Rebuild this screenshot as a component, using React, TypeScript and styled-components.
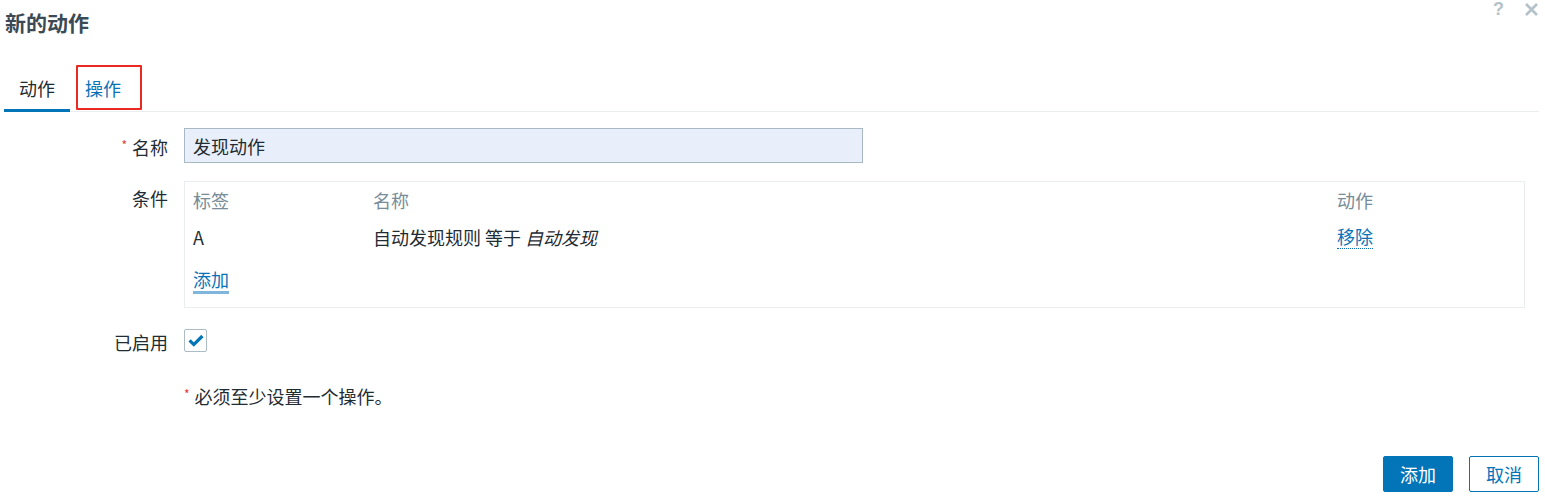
import styled, { createGlobalStyle } from 'styled-components';

const GlobalStyle = createGlobalStyle`
  body {
    margin: 0;
    background: #ffffff;
    font-family: "Noto Sans CJK SC", "Noto Sans", sans-serif;
    font-size: 18px;
    color: #1f2c33;
  }
`;

const Page = styled.div`
  width: 1545px;
  height: 501px;
  box-sizing: border-box;
  padding: 0 6px 0 4px;
  display: flex;
  flex-direction: column;
`;

const Header = styled.div`
  display: flex;
  justify-content: space-between;
  align-items: flex-start;
  height: 44px;
`;

const Title = styled.h2`
  margin: 0;
  padding-left: 1px;
  font-size: 21px;
  line-height: 44px;
  font-weight: 700;
  color: #3b4a54;
`;

const HeaderControls = styled.div`
  display: flex;
  align-items: center;
  gap: 20px;
  padding-top: 1px;
  color: #b4c1c9;
`;

const HelpMark = styled.span`
  font-family: "Liberation Sans", sans-serif;
  font-size: 18px;
  font-weight: 700;
  line-height: 17px;
`;

const TabList = styled.div`
  display: flex;
  margin-top: 20px;
  border-bottom: 1px solid #ebeef0;
`;

const Tab = styled.div<{ $active?: boolean }>`
  position: relative;
  padding: 12px 15px 9px 15px;
  line-height: 24px;
  color: ${p => (p.$active ? '#1f2c33' : '#0a72b6')};
  border-bottom: 3px solid ${p => (p.$active ? '#0275b8' : 'transparent')};
  margin-bottom: -1px;
`;

// red annotation box drawn over the second tab
const Marker = styled.span`
  position: absolute;
  left: 6px;
  right: -6px;
  top: 1px;
  bottom: -1px;
  border: 2px solid #ea2a22;
  border-radius: 1px;
`;

const Form = styled.div`
  display: grid;
  grid-template-columns: 164px 1fr;
  column-gap: 16px;
  padding-top: 16px;
  padding-right: 14px;
`;

const Label = styled.div<{ $mt?: number }>`
  text-align: right;
  line-height: 24px;
  padding-top: 5px;
  margin-top: ${p => p.$mt ?? 0}px;
  color: #1f2c33;
`;

const Field = styled.div<{ $mt?: number }>`
  margin-top: ${p => p.$mt ?? 0}px;
  display: flex;
  align-items: flex-start;
`;

const Star = styled.span`
  color: #e33734;
  font-size: 12px;
  vertical-align: 5px;
  margin-right: 5px;
`;

const TextInput = styled.input`
  width: 679px;
  height: 35px;
  box-sizing: border-box;
  border: 1px solid #a9b9c4;
  background: #e8effa;
  padding: 0 8px;
  font-family: inherit;
  font-size: 18px;
  color: #1f2c33;
  outline: none;
`;

const CondBox = styled.div`
  flex: 1;
  border: 1px solid #ebeef0;
  padding: 6px 9px 13px 8px;
`;

const CondRow = styled.div<{ $head?: boolean; $mt?: number }>`
  display: grid;
  grid-template-columns: 180px 1fr 178px;
  line-height: 24px;
  margin-top: ${p => p.$mt ?? 0}px;
  color: ${p => (p.$head ? '#768d99' : '#1f2c33')};
`;

const Italic = styled.em`
  font-style: italic;
`;

const DottedLink = styled.span`
  justify-self: start;
  color: #0a72b6;
  border-bottom: 1px dotted #0a72b6;
  line-height: 22px;
`;

const AddLink = styled.span`
  display: inline-block;
  margin-top: 19px;
  color: #0a72b6;
  line-height: 23px;
  border-bottom: 3px solid #80b6db;
`;

const Checkbox = styled.span`
  width: 23px;
  height: 23px;
  box-sizing: border-box;
  border: 1px solid #acbbc4;
  border-radius: 2px;
  display: flex;
  align-items: center;
  justify-content: center;
  background: #fff;
`;

const Note = styled.div`
  grid-column: 2;
  margin-top: 28px;
  line-height: 24px;
`;

const Footer = styled.div`
  margin-top: auto;
  margin-bottom: 9px;
  display: flex;
  justify-content: flex-end;
  gap: 16px;
`;

const Button = styled.button<{ $primary?: boolean }>`
  width: 70px;
  height: 36px;
  border-radius: 2px;
  border: 1px solid #0275b8;
  background: ${p => (p.$primary ? '#0275b8' : '#ffffff')};
  color: ${p => (p.$primary ? '#ffffff' : '#0275b8')};
  font-family: inherit;
  font-size: 18px;
  padding: 0;
  cursor: pointer;
`;

export default function App() {
  return (
    <>
      <GlobalStyle />
      <Page>
        <Header>
          <Title>新的动作</Title>
          <HeaderControls>
            <HelpMark>?</HelpMark>
            <svg width="15" height="13" viewBox="0 0 15 13">
              <path d="M2 1 L13 12 M13 1 L2 12" stroke="#b4c1c9" strokeWidth="2.6" />
            </svg>
          </HeaderControls>
        </Header>

        <TabList>
          <Tab $active>动作</Tab>
          <Tab>
            操作
            <Marker />
          </Tab>
        </TabList>

        <Form>
          <Label>
            <Star>*</Star>名称
          </Label>
          <Field>
            <TextInput defaultValue="发现动作" />
          </Field>

          <Label $mt={18}>条件</Label>
          <Field $mt={18}>
            <CondBox>
              <CondRow $head>
                <span>标签</span>
                <span>名称</span>
                <span>动作</span>
              </CondRow>
              <CondRow $mt={13}>
                <span>A</span>
                <span>
                  自动发现规则 等于 <Italic>自动发现</Italic>
                </span>
                <DottedLink>移除</DottedLink>
              </CondRow>
              <AddLink>添加</AddLink>
            </CondBox>
          </Field>

          <Label $mt={17}>已启用</Label>
          <Field $mt={21}>
            <Checkbox>
              <svg width="16" height="13" viewBox="0 0 16 13">
                <path d="M1.6 6.4 L5.8 10.6 L14.4 2" fill="none" stroke="#0275b8" strokeWidth="3.2" />
              </svg>
            </Checkbox>
          </Field>

          <Note>
            <Star>*</Star>必须至少设置一个操作。
          </Note>
        </Form>

        <Footer>
          <Button $primary>添加</Button>
          <Button>取消</Button>
        </Footer>
      </Page>
    </>
  );
}
